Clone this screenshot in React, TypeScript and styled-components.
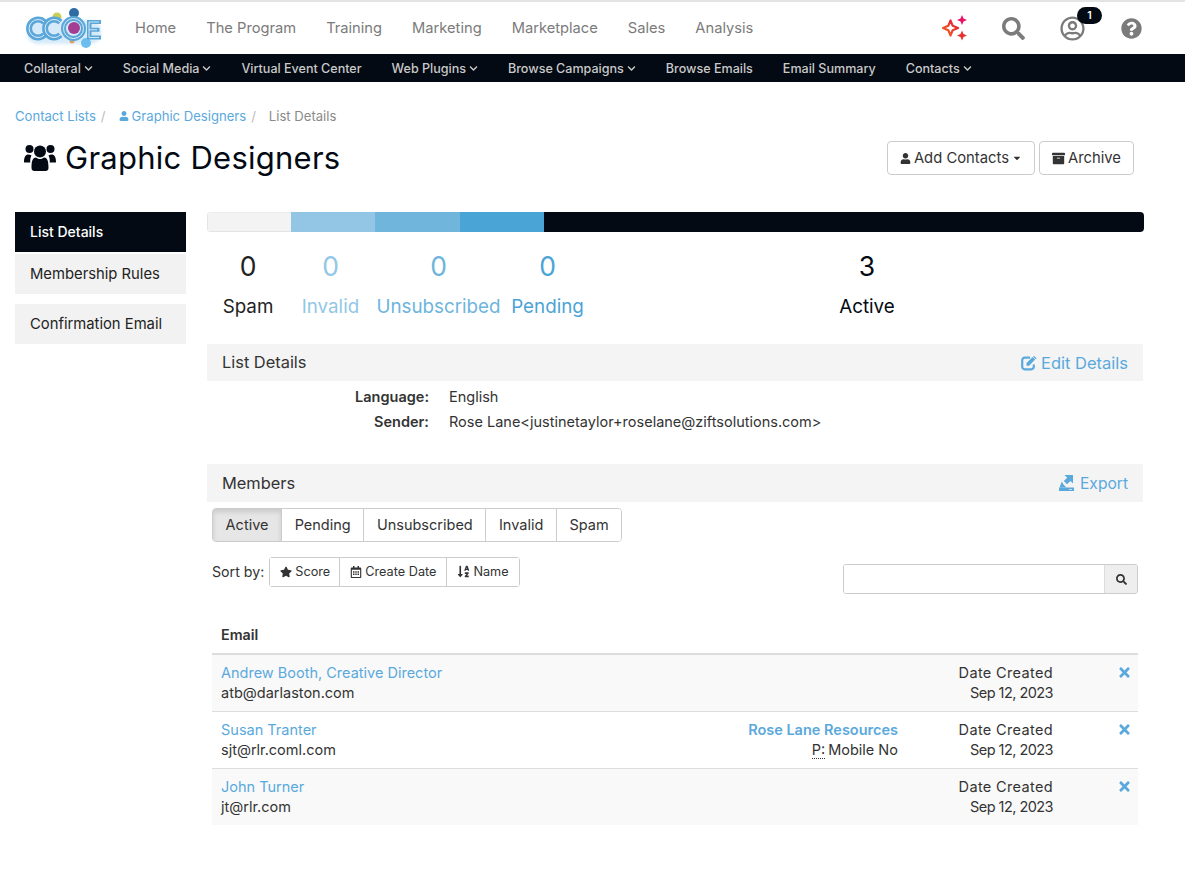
import React from 'react';
import styled, { createGlobalStyle } from 'styled-components';
import { FaCaretDown, FaSearch, FaStar, FaTimes, FaQuestionCircle, FaChevronDown, FaRegCalendarAlt, FaSortAlphaDown, FaArchive, FaUser, FaRegUserCircle } from 'react-icons/fa';

const GlobalStyle = createGlobalStyle`
  html, body { margin: 0; padding: 0; background: #fff; }
  body {
    font-family: Inter, "Open Sans", "Liberation Sans", sans-serif;
    color: #333;
    font-size: 14px;
  }
  a { color: inherit; text-decoration: none; }
`;

const Page = styled.div`
  width: 1185px;
  min-height: 887px;
  border-top: 2px solid #e4e4e4;
  box-sizing: border-box;
`;

const TopNav = styled.header`
  display: flex;
  align-items: center;
  height: 52px;
  padding-left: 25px;
`;

const NavLinks = styled.nav`
  display: flex;
  gap: 30px;
  margin-left: 30px;
  flex: 1;
`;

const NavLink = styled.a`
  font-size: 14.7px;
  color: #7b7b7b;
`;

const NavIcons = styled.div`
  display: flex;
  align-items: center;
  padding-right: 24px;
`;

const NavIcon = styled.span<{ $w: number; $color?: string }>`
  width: ${p => p.$w}px;
  display: flex;
  justify-content: center;
  color: ${p => p.$color || '#7b7b7b'};
  position: relative;
`;

const Badge = styled.span`
  position: absolute;
  top: -9px;
  right: 0;
  width: 25px;
  height: 17px;
  border-radius: 9px;
  background: #040a13;
  color: #fff;
  font-size: 10.5px;
  font-weight: 600;
  display: flex;
  align-items: center;
  justify-content: center;
`;

const SubNav = styled.nav`
  display: flex;
  align-items: center;
  gap: 30px;
  height: 28px;
  padding-left: 24px;
  background: #040a13;
`;

const SubLink = styled.a`
  display: flex;
  align-items: center;
  gap: 3px;
  font-size: 12.55px;
  color: #c9c9c9;
  font-weight: 500;
`;

const Content = styled.main`
  padding: 25px 41px 0 15px;
`;

const Breadcrumbs = styled.div`
  display: flex;
  align-items: center;
  font-size: 13.1px;
  height: 17px;
  color: #8a8a8a;
`;

const Crumb = styled.a`
  display: flex;
  align-items: center;
  gap: 3px;
  color: #5aa9dd;
`;

const Slash = styled.span`
  color: #bbb;
  margin: 0 13px 0 5px;
`;

const TitleRow = styled.div`
  display: flex;
  justify-content: space-between;
  align-items: center;
  margin-top: 13px;
  padding-left: 9px;
  height: 40px;
`;

const Title = styled.h1`
  display: flex;
  align-items: center;
  gap: 9px;
  margin: 0;
  font-size: 31px;
  font-weight: 400;
  color: #040a13;
  letter-spacing: 0.25px;
`;

const TitleActions = styled.div`
  display: flex;
  gap: 4px;
  margin-right: 10px;
  margin-top: 2px;
`;

const Button = styled.button`
  display: flex;
  align-items: center;
  gap: 3px;
  height: 34px;
  padding: 0 12px;
  background: #fff;
  border: 1px solid #ccc;
  border-radius: 4px;
  color: #333;
  font-family: inherit;
  font-size: 14.8px;
`;

const Body = styled.div`
  display: flex;
  margin-top: 35px;
`;

const Sidebar = styled.aside`
  width: 171px;
  flex-shrink: 0;
  display: flex;
  flex-direction: column;
`;

const SideItem = styled.a<{ $active?: boolean; $gap?: number }>`
  display: flex;
  align-items: center;
  height: 40px;
  box-sizing: border-box;
  padding: 0 0 ${p => (p.$active ? 1 : 0)}px 15px;
  margin-bottom: ${p => p.$gap ?? 0}px;
  font-size: ${p => (p.$active ? 14 : 14.8)}px;
  background: ${p => (p.$active ? '#040a13' : '#f2f2f2')};
  color: ${p => (p.$active ? '#fff' : '#222')};
  font-weight: ${p => (p.$active ? 500 : 400)};
`;

const Main = styled.div`
  margin-left: 21px;
  width: 937px;
`;

const ProgressBar = styled.div`
  display: flex;
  height: 20px;
  border-radius: 4px;
  overflow: hidden;
`;

const ProgressPart = styled.div<{ $w?: number; $color: string; $edge?: boolean }>`
  background: ${p => p.$color};
  box-sizing: border-box;
  ${p => (p.$w ? `width: ${p.$w}px;` : 'flex: 1;')}
  ${p => (p.$edge ? 'border: 1px solid #e4e4e4; border-right: 0; border-top-color: #ececec;' : '')}
`;

const Stats = styled.div`
  display: flex;
  margin-top: 16px;
`;

const Stat = styled.div<{ $w?: number; $color: string }>`
  ${p => (p.$w ? `width: ${p.$w}px;` : 'flex: 1;')}
  color: ${p => p.$color};
  text-align: center;
`;

const StatNum = styled.div`
  font-size: 26.5px;
  line-height: 36px;
`;

const StatLabel = styled.div`
  font-size: 18.8px;
  line-height: 24px;
  margin-top: 11px;
  margin-bottom: -1px;
  white-space: nowrap;
`;

const SectionHead = styled.div<{ $mt: number; $h: number }>`
  display: flex;
  justify-content: space-between;
  align-items: center;
  height: ${p => p.$h}px;
  margin-top: ${p => p.$mt}px;
  width: 936px;
  padding: 0 15px 1px;
  box-sizing: border-box;
  background: #f4f4f4;
  font-size: 16.4px;
  color: #333;
`;

const HeadAction = styled.a<{ $size: number; $gap: number }>`
  display: flex;
  align-items: center;
  gap: ${p => p.$gap}px;
  font-size: ${p => p.$size}px;
  color: #5aa9dd;
  margin-top: 1px;
`;

const DetailRows = styled.dl`
  display: grid;
  grid-template-columns: 222px auto;
  column-gap: 20px;
  row-gap: 6px;
  margin: 6px 0 0;
  height: 71px;
  align-content: start;
  font-size: 14.5px;
  line-height: 19px;
`;

const DetailKey = styled.dt`
  text-align: right;
  font-weight: 600;
`;

const DetailValue = styled.dd`
  margin: 0;
`;

const Inner = styled.div`
  padding: 0 6px 0 5px;
`;

const Tabs = styled.div`
  display: inline-flex;
  margin-top: 6px;
  height: 34px;
  border: 1px solid #ccc;
  border-radius: 4px;
  overflow: hidden;
  box-sizing: border-box;
`;

const Tab = styled.button<{ $active?: boolean }>`
  border: 0;
  border-left: 1px solid #ccc;
  &:first-child { border-left: 0; }
  padding: 0 12.6px 1px;
  background: ${p => (p.$active ? '#e6e6e6' : '#fff')};
  box-shadow: ${p => (p.$active ? 'inset 0 3px 5px rgba(0,0,0,.125)' : 'none')};
  color: #333;
  font-family: inherit;
  font-size: 14.5px;
`;

const SortRow = styled.div`
  display: flex;
  align-items: flex-start;
  margin-top: 15px;
  height: 57px;
`;

const SortLabel = styled.span`
  font-size: 14.2px;
  line-height: 30px;
  margin-right: 5px;
`;

const SortGroup = styled.div`
  display: flex;
  height: 30px;
  border: 1px solid #ccc;
  border-radius: 3px;
  box-sizing: border-box;
`;

const SortButton = styled.button`
  display: flex;
  align-items: center;
  gap: 3px;
  border: 0;
  border-left: 1px solid #ccc;
  &:first-child { border-left: 0; padding-right: 9px; }
  padding: 0 10px 1px;
  background: #fff;
  color: #333;
  font-family: inherit;
  font-size: 12.7px;
`;

const SearchBox = styled.div`
  display: flex;
  width: 295px;
  height: 30px;
  margin: 7px 0 0 auto;
  border: 1px solid #ccc;
  border-radius: 3px;
  box-sizing: border-box;
  overflow: hidden;
`;

const SearchInput = styled.input`
  flex: 1;
  min-width: 0;
  border: 0;
  outline: 0;
`;

const SearchAddon = styled.span`
  display: flex;
  align-items: center;
  justify-content: center;
  width: 32px;
  background: #eee;
  border-left: 1px solid #ddd;
  color: #333;
`;

const TableHead = styled.div`
  height: 41px;
  box-sizing: border-box;
  padding: 11px 9px 0;
  border-bottom: 2px solid #ddd;
  font-size: 14.3px;
  line-height: 19px;
  font-weight: 600;
`;

const Row = styled.div<{ $striped?: boolean }>`
  display: grid;
  grid-template-columns: 1fr 260px 155px 79px;
  height: 48px;
  padding: 8px 6px 0 9px;
  & + & { border-top: 1px solid #ddd; }
  background: ${p => (p.$striped ? '#f9f9f9' : '#fff')};
  font-size: 14.5px;
  line-height: 20px;
`;

const Cell = styled.div<{ $right?: boolean }>`
  text-align: ${p => (p.$right ? 'right' : 'left')};
`;

const DateLabel = styled.div`
  letter-spacing: 0.35px;
`;

const DateValue = styled.div`
  letter-spacing: -0.55px;
`;

const Blue = styled.a<{ $bold?: boolean }>`
  display: block;
  color: #5aa9dd;
  font-weight: ${p => (p.$bold ? 600 : 400)};
`;

const Abbr = styled.abbr`
  text-decoration: none;
  border-bottom: 1px dotted #333;
  margin-right: 3px;
`;

const Remove = styled.div`
  display: flex;
  justify-content: flex-end;
  padding-top: 2px;
  color: #5aa9dd;
`;

const Logo = () => (
  <svg width="80" height="44" viewBox="0 0 80 44" fill="none">
    <defs>
      <filter id="logoGlow" x="-10%" y="-10%" width="120%" height="130%">
        <feGaussianBlur stdDeviation="1.4" />
      </filter>
    </defs>
    <rect x="2" y="14" width="74" height="24" rx="10" fill="#8cc6ee" filter="url(#logoGlow)" opacity="0.35" />
    <circle cx="32" cy="11" r="4.500" fill="#c8cf55" />
    <circle cx="49" cy="7" r="5" fill="#2e6da4" />
    <circle cx="47" cy="35" r="2.500" fill="#d6a26e" />
    <circle cx="61" cy="37" r="5" fill="#6bbdf0" />
    <path d="M19.400 16.100A9 9 0 1 0 19.400 28.900" stroke="#5ba6d8" strokeWidth="6" />
    <path d="M19.400 16.100A9 9 0 1 0 19.400 28.900" stroke="#d9eefb" strokeWidth="1" />
    <path d="M35.400 16.100A9 9 0 1 0 35.400 28.900" stroke="#5ba6d8" strokeWidth="6" />
    <path d="M35.400 16.100A9 9 0 1 0 35.400 28.900" stroke="#d9eefb" strokeWidth="1" />
    <circle cx="48.500" cy="22.500" r="10" stroke="#5ba6d8" strokeWidth="5" />
    <circle cx="48.500" cy="22.500" r="10" stroke="#d9eefb" strokeWidth="1" />
    <circle cx="49" cy="22" r="6" fill="#a23f93" />
    <path d="M76 14H62v19.500h14v-4h-9.500v-3.700h8v-4h-8V18h9.500z" fill="#5ba6d8" />
    <path d="M74 16H64v15.500h10M64 23.800h8" stroke="#d9eefb" strokeWidth="0.9" />
  </svg>
);

const Sparkles = () => (
  <svg width="26" height="26" viewBox="0 0 26 26">
    <defs>
      <linearGradient id="sparkle" x1="0" y1="1" x2="1" y2="0">
        <stop offset="0" stopColor="#f2691e" />
        <stop offset="1" stopColor="#e4173f" />
      </linearGradient>
    </defs>
    <path
      d="M8.500 5.500l2.200 5.300 5.300 2.200-5.300 2.200-2.200 5.300-2.200-5.300L1 13l5.300-2.200z"
      fill="none"
      stroke="url(#sparkle)"
      strokeWidth="2.200"
      strokeLinejoin="round"
    />
    <path d="M20 0l1.500 3.500 3.500 1.500-3.500 1.500L20 10 18.500 6.500 15 5 18.500 3.500z" fill="#ea1264" />
    <path d="M20 15.500l1.500 3.500 3.500 1.500-3.500 1.500-1.500 3.500-1.500-3.500-3.500-1.500 3.500-1.500z" fill="#e8302f" />
  </svg>
);

const UsersIcon = () => (
  <svg width="32" height="31" viewBox="0 0 32 31" fill="#040a13">
    <circle cx="5.500" cy="7" r="4" />
    <circle cx="26.500" cy="7" r="4" />
    <circle cx="16" cy="9.500" r="6" />
    <path d="M0 20c0-5 1.500-7.500 4.500-7.500 1 0 2 .6 3 1-1 2-1.500 4-1.200 7H1.500C.5 20.500 0 20.500 0 20z" />
    <path d="M32 20c0-5-1.500-7.500-4.500-7.500-1 0-2 .6-3 1 1 2 1.500 4 1.200 7h4.800c1 0 1.500 0 1.500-.5z" />
    <path d="M7.500 26c0-6 .8-10.500 4.500-10.500 1 .8 2.500 1.500 4 1.500s3-.7 4-1.500c3.700 0 4.500 4.500 4.500 10.500 0 2-1.200 3-3 3h-11c-1.800 0-3-1-3-3z" />
  </svg>
);

const EditIcon = () => (
  <svg width="16" height="16" viewBox="0 0 16 16" fill="none">
    <path d="M12.800 9.500v2.300a2.500 2.500 0 0 1-2.500 2.500H3.700a2.500 2.500 0 0 1-2.500-2.500V5.200a2.500 2.500 0 0 1 2.500-2.500H9" stroke="#5aa9dd" strokeWidth="2.200" />
    <path d="M5.500 10.800V8l6-6 2.600 2.600-6 6.200z" fill="#5aa9dd" />
    <path d="M13 .8l2.600 2.600-.9.900-2.600-2.600z" fill="#5aa9dd" />
  </svg>
);

const ExportIcon = () => (
  <svg width="15" height="16" viewBox="0 0 15 16" fill="#5aa9dd">
    <path d="M5.500 0H14V8.500l-2.600-2.600-3.400 3.400-3.200-3.200 3.400-3.400z" />
    <path d="M2.800 6.500L.5 12.500H7.500L4.500 9.500z" />
    <path d="M0 12.500h15V16H0z" />
    <path d="M10 14h3v.7h-3z" fill="#f4f4f4" />
  </svg>
);

const Chevron = () => <FaChevronDown size={9} />;

const subLinks: [string, boolean][] = [
  ['Collateral', true],
  ['Social Media', true],
  ['Virtual Event Center', false],
  ['Web Plugins', true],
  ['Browse Campaigns', true],
  ['Browse Emails', false],
  ['Email Summary', false],
  ['Contacts', true],
];

const stats = [
  { n: 0, label: 'Spam', color: '#222', w: 82 },
  { n: 0, label: 'Invalid', color: '#92c7e6', w: 83 },
  { n: 0, label: 'Unsubscribed', color: '#6db5dc', w: 133 },
  { n: 0, label: 'Pending', color: '#4ba4d6', w: 85 },
  { n: 3, label: 'Active', color: '#040a13' },
];

const members = [
  { name: 'Andrew Booth, Creative Director', email: 'atb@darlaston.com' },
  { name: 'Susan Tranter', email: 'sjt@rlr.coml.com', company: 'Rose Lane Resources' },
  { name: 'John Turner', email: 'jt@rlr.com' },
];

export default function App() {
  return (
    <Page>
      <GlobalStyle />
      <TopNav>
        <Logo />
        <NavLinks>
          {['Home', 'The Program', 'Training', 'Marketing', 'Marketplace', 'Sales', 'Analysis'].map(l => (
            <NavLink key={l}>{l}</NavLink>
          ))}
        </NavLinks>
        <NavIcons>
          <NavIcon $w={59}><Sparkles /></NavIcon>
          <NavIcon $w={59}><FaSearch size={23} /></NavIcon>
          <NavIcon $w={59}>
            <FaRegUserCircle size={25} />
            <Badge>1</Badge>
          </NavIcon>
          <NavIcon $w={59}><FaQuestionCircle size={21} /></NavIcon>
        </NavIcons>
      </TopNav>
      <SubNav>
        {subLinks.map(([label, hasMenu]) => (
          <SubLink key={label}>
            {label}
            {hasMenu && <Chevron />}
          </SubLink>
        ))}
      </SubNav>
      <Content>
        <Breadcrumbs>
          <Crumb>Contact Lists</Crumb>
          <Slash>/</Slash>
          <Crumb><FaUser size={10} />Graphic Designers</Crumb>
          <Slash>/</Slash>
          <span>List Details</span>
        </Breadcrumbs>
        <TitleRow>
          <Title><UsersIcon />Graphic Designers</Title>
          <TitleActions>
            <Button><FaUser size={11} />Add Contacts<FaCaretDown size={10} /></Button>
            <Button><FaArchive size={13} />Archive</Button>
          </TitleActions>
        </TitleRow>
        <Body>
          <Sidebar>
            <SideItem $active $gap={2}>List Details</SideItem>
            <SideItem $gap={10}>Membership Rules</SideItem>
            <SideItem>Confirmation Email</SideItem>
          </Sidebar>
          <Main>
            <ProgressBar>
              <ProgressPart $w={84} $color="#f3f3f3" $edge />
              <ProgressPart $w={84} $color="#93c6e4" />
              <ProgressPart $w={85} $color="#6fb5dc" />
              <ProgressPart $w={84} $color="#4ba4d6" />
              <ProgressPart $color="#040a13" />
            </ProgressBar>
            <Stats>
              {stats.map(s => (
                <Stat key={s.label} $w={s.w} $color={s.color}>
                  <StatNum>{s.n}</StatNum>
                  <StatLabel>{s.label}</StatLabel>
                </Stat>
              ))}
            </Stats>
            <SectionHead $mt={26} $h={37}>
              List Details
              <HeadAction $size={16.5} $gap={4}><EditIcon />Edit Details</HeadAction>
            </SectionHead>
            <DetailRows>
              <DetailKey>Language:</DetailKey>
              <DetailValue>English</DetailValue>
              <DetailKey>Sender:</DetailKey>
              <DetailValue>Rose Lane&lt;justinetaylor+roselane@ziftsolutions.com&gt;</DetailValue>
            </DetailRows>
            <SectionHead $mt={6} $h={38}>
              Members
              <HeadAction $size={15.6} $gap={6}><ExportIcon />Export</HeadAction>
            </SectionHead>
            <Inner>
              <Tabs>
                <Tab $active>Active</Tab>
                <Tab>Pending</Tab>
                <Tab>Unsubscribed</Tab>
                <Tab>Invalid</Tab>
                <Tab>Spam</Tab>
              </Tabs>
              <SortRow>
                <SortLabel>Sort by:</SortLabel>
                <SortGroup>
                  <SortButton><FaStar size={12} />Score</SortButton>
                  <SortButton><FaRegCalendarAlt size={12} />Create Date</SortButton>
                  <SortButton><FaSortAlphaDown size={13} />Name</SortButton>
                </SortGroup>
                <SearchBox>
                  <SearchInput />
                  <SearchAddon><FaSearch size={11} /></SearchAddon>
                </SearchBox>
              </SortRow>
              <TableHead>Email</TableHead>
              {members.map((m, i) => (
                <Row key={m.email} $striped={i % 2 === 0}>
                  <Cell>
                    <Blue>{m.name}</Blue>
                    {m.email}
                  </Cell>
                  <Cell $right>
                    {m.company && (
                      <>
                        <Blue $bold>{m.company}</Blue>
                        <Abbr title="Phone">P:</Abbr>Mobile No
                      </>
                    )}
                  </Cell>
                  <Cell $right>
                    <DateLabel>Date Created</DateLabel>
                    <DateValue>Sep 12, 2023</DateValue>
                  </Cell>
                  <Remove><FaTimes size={15} /></Remove>
                </Row>
              ))}
            </Inner>
          </Main>
        </Body>
      </Content>
    </Page>
  );
}
